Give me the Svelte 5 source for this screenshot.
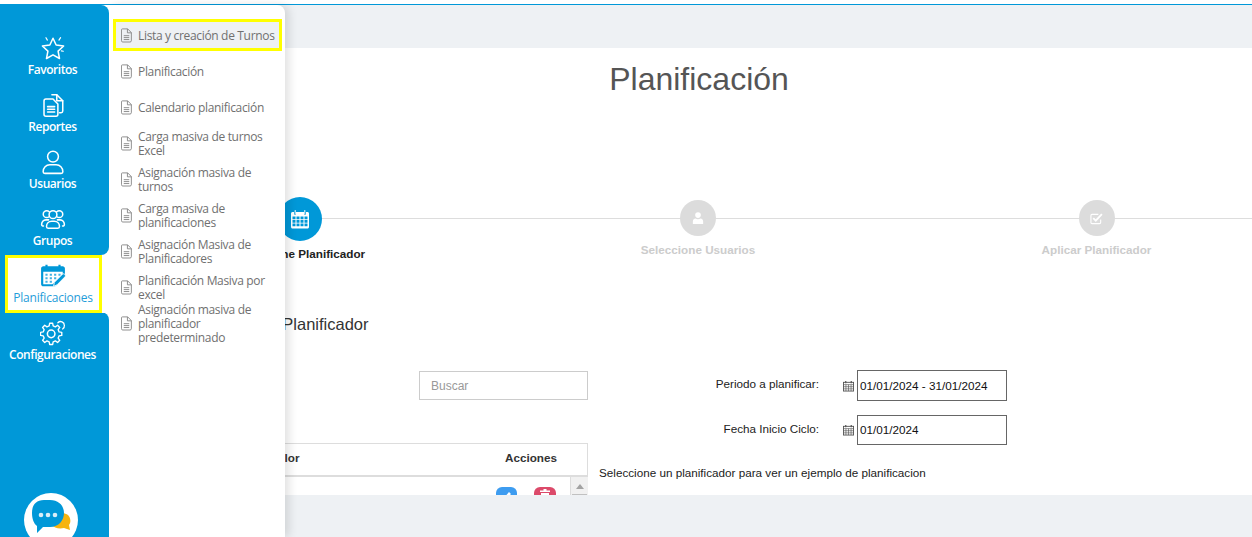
<script>
  const gearPath = (() => {
    const cx = 12, cy = 12, teeth = 8, ro = 11, ri = 8.4;
    let d = '';
    for (let i = 0; i < teeth; i++) {
      const a = (i / teeth) * Math.PI * 2;
      const w = Math.PI / teeth;
      const pts = [[ri, a - w * 0.62], [ro, a - w * 0.36], [ro, a + w * 0.36], [ri, a + w * 0.62]];
      pts.forEach(([r, t], j) => {
        const x = (cx + r * Math.cos(t)).toFixed(2);
        const y = (cy + r * Math.sin(t)).toFixed(2);
        d += (i === 0 && j === 0 ? 'M' : 'L') + x + ' ' + y + ' ';
      });
    }
    return d + 'Z';
  })();

  const railTop = [
    { label: 'Favoritos', icon: 'star' },
    { label: 'Reportes', icon: 'docs' },
    { label: 'Usuarios', icon: 'user' },
    { label: 'Grupos', icon: 'group' }
  ];

  const submenu = [
    'Lista y creación de Turnos',
    'Planificación',
    'Calendario planificación',
    'Carga masiva de turnos Excel',
    'Asignación masiva de turnos',
    'Carga masiva de planificaciones',
    'Asignación Masiva de Planificadores',
    'Planificación Masiva por excel',
    'Asignación masiva de planificador predeterminado'
  ];
</script>

{#snippet railIcon(name)}
  <svg class="rail-icon" viewBox="0 0 24 24" fill="none" stroke="currentColor" stroke-width="1.4" stroke-linecap="round" stroke-linejoin="round">
    {#if name === 'star'}
      <path d="M12 3l2.900 6.200 6.900.9-5.100 4.800 1.300 6.800-6-3.400-6 3.400 1.300-6.800-5.100-4.800 6.900-.9z" />
      <path d="M5.500 2.500l1.300 2.200M19 2.500l-1.500 2.200M21.500 15l-1.800-.4" stroke-width="1.100" />
    {:else if name === 'docs'}
      <path d="M11 2.500h4.500l5.500 5.500v9.500c0 1-.6 1.600-1.500 1.600H18" />
      <path d="M15.500 2.500V8H21" />
      <path d="M5.500 6.500H12l4.500 4.500v9.500c0 1-.7 1.800-1.700 1.800H5.500c-1 0-1.800-.8-1.800-1.800V8.300c0-1 .8-1.800 1.800-1.800z" />
      <path d="M7 13.500h6.500M7 16h6.500M7 18.500h6.500" />
    {:else if name === 'user'}
      <circle cx="12" cy="7" r="5" />
      <path d="M4.500 22.500c-1 0-1.600-.6-1.600-1.600 0-3.600 2.700-6.400 6.200-6.400h5.800c3.500 0 6.200 2.800 6.200 6.400 0 1-.6 1.600-1.600 1.600z" />
    {:else if name === 'group'}
      <circle cx="6.200" cy="7.500" r="3.200" />
      <circle cx="17.800" cy="7.500" r="3.200" />
      <circle cx="12" cy="8" r="3.600" fill="#0098d8" />
      <path d="M3.200 18.500c-1 0-1.700-.6-1.700-1.500 0-2.300 1.500-4.200 4-4.200h2.500M20.800 18.500c1 0 1.700-.6 1.700-1.500 0-2.300-1.500-4.200-4-4.200H16" />
      <path d="M7.500 20.500c-1 0-1.500-.7-1.500-1.500 0-2.800 2-5 4.800-5h2.400c2.800 0 4.800 2.200 4.800 5 0 .8-.5 1.500-1.500 1.500z" fill="#0098d8" />
    {:else if name === 'gear'}
      <path d={gearPath} transform="translate(-.5 2) scale(.9)" />
      <circle cx="10.300" cy="12.800" r="3.500" />
      <path d="M16.500 2.500a3.500 3.500 0 0 1 6 2.500c.2 1.500-.6 2.600-1.600 3.300" stroke-width="1.200" />
    {/if}
  </svg>
{/snippet}

{#snippet docIcon()}
  <svg class="doc" viewBox="0 0 12 16" fill="none" stroke="#858585" stroke-width="1">
    <path d="M1.500.8h5.800l4 4v8.900c0 .8-.6 1.400-1.400 1.400H1.900c-.8 0-1.400-.6-1.400-1.400V1.800c0-.6.400-1 1-1z" />
    <path d="M7 .8v4.300h4.300M3 8.200h6M3 10.300h6M3 12.400h6" />
  </svg>
{/snippet}

{#snippet calIcon()}
  <svg class="cal" viewBox="0 0 12 12" width="11" height="12" fill="none" stroke="#555" stroke-width="1">
    <rect x=".5" y="2" width="11" height="9.500" />
    <path d="M.5 4.500h11M.5 6.800h11M.5 9.100h11M3.200 4.500v7M6 4.500v7M8.800 4.500v7" stroke-width=".7" />
    <path d="M3 .5v2.500M9 .5v2.500" stroke-width="1.300" />
  </svg>
{/snippet}

<div class="page">
  <div class="shell">
    <main class="card">
      <h1>Planificación</h1>

      <ol class="stepper">
        <li class="step current">
          <span class="bubble">
            <svg viewBox="0 0 20 20" width="20" height="20">
              <path fill="#fff" d="M1 4.500c0-.8.700-1.500 1.500-1.500H4v2.500h2V3h8v2.500h2V3h1.500c.8 0 1.500.7 1.500 1.500V18c0 .8-.7 1.500-1.500 1.500h-15C1.700 19.500 1 18.800 1 18zM2.500 7.500v2.700h3V7.500zm4 0v2.700h3V7.500zm4 0v2.700h3V7.500zm4 0v2.700h3V7.500zm-12 3.500v2.700h3V11zm4 0v2.700h3V11zm4 0v2.700h3V11zm4 0v2.700h3V11zm-12 3.500v2.800h3v-2.800zm4 0v2.800h3v-2.800zm4 0v2.800h3v-2.800zm4 0v2.800h3v-2.800z" fill-rule="evenodd" />
              <rect x="4.700" y="1" width="1" height="4" rx=".5" fill="#fff" />
              <rect x="14.300" y="1" width="1" height="4" rx=".5" fill="#fff" />
            </svg>
          </span>
          <span class="step-label">Seleccione Planificador</span>
        </li>
        <li class="step">
          <span class="bubble">
            <svg viewBox="0 0 14 14" width="12" height="12">
              <circle cx="7" cy="3.600" r="3.300" fill="#fff" />
              <path fill="#fff" d="M1 14v-3.200C1 8.700 2.500 7.500 4 7.500c.8.600 1.900 1 3 1s2.200-.4 3-1c1.500 0 3 1.200 3 3.300V14z" />
            </svg>
          </span>
          <span class="step-label">Seleccione Usuarios</span>
        </li>
        <li class="step">
          <span class="bubble">
            <svg viewBox="0 0 14 14" width="13" height="13" fill="none" stroke="#fff">
              <path stroke-width="1.200" d="M11.500 8v3.300c0 .7-.5 1.200-1.200 1.200H2.200c-.7 0-1.200-.5-1.200-1.200V3.700c0-.7.500-1.200 1.200-1.200H9" />
              <path stroke-width="2" d="M3.500 6.500 6.200 9.200 12.800 2.200" />
            </svg>
          </span>
          <span class="step-label">Aplicar Planificador</span>
        </li>
      </ol>

      <h2>Seleccione Planificador</h2>

      <div class="columns">
        <section class="left">
          <input class="search" type="text" placeholder="Buscar" />
          <div class="table">
            <div class="thead">
              <span class="th-name">Color</span>
              <span class="th-actions">Acciones</span>
            </div>
            <div class="tbody">
              <div class="row">
                <span class="act edit">
                  <svg viewBox="0 0 12 12" width="12" height="12"><path d="M2 11 8 4l2 2-6 6z" fill="#fff" /></svg>
                </span>
                <span class="act del">
                  <svg viewBox="0 0 12 12" width="12" height="12"><path d="M4.500 1h3v1.500h3.500v1.500H1V2.500h3.500zM2 5h8v7H2z" fill="#fff" /></svg>
                </span>
              </div>
              <div class="scrollbar">
                <span class="arrow"></span>
                <span class="thumb"></span>
              </div>
            </div>
          </div>
        </section>

        <section class="right">
          <div class="field first">
            <span class="flabel">Periodo a planificar:</span>
            {@render calIcon()}
            <input class="date" type="text" value="01/01/2024 - 31/01/2024" />
          </div>
          <div class="field second">
            <span class="flabel">Fecha Inicio Ciclo:</span>
            {@render calIcon()}
            <input class="date" type="text" value="01/01/2024" />
          </div>
          <p class="hint">Seleccione un planificador para ver un ejemplo de planificacion</p>
        </section>
      </div>
    </main>
  </div>

  <nav class="nav">
    <div class="rail">
      <div class="rail-part top">
        {#each railTop as item}
          <a class="rail-item" href="#top">
            {@render railIcon(item.icon)}
            <span>{item.label}</span>
          </a>
        {/each}
      </div>
      <div class="active-wrap">
        <a class="rail-item active" href="#top">
          <svg class="rail-icon cal-big" viewBox="0 0 24 24">
            <path fill="#0098d8" d="M3 3h2V1.500h2V3h10V1.500h2V3h2c1 0 2 1 2 2v7l-9 9.500H3c-1 0-2-1-2-2V5c0-1 1-2 2-2z" />
            <path fill="#fff" d="M3 8h18v3l-9.500 8.500H3z" />
            <path fill="#0098d8" opacity=".75" d="M5 10h2v1.800H5zM9 10h2v1.800H9zM13 10h2v1.800h-2zM17 10h2v1.800h-2zM5 13.200h2V15H5zM9 13.200h2V15H9zM13 13.200h2V15h-2zM5 16.400h2v1.800H5zM9 16.400h2v1.800H9z" />
            <path fill="#0098d8" stroke="#fff" stroke-width=".8" d="M12.500 21.500l.8-3.700 7.200-7.300c.7-.7 1.700-.7 2.400 0s.7 1.700 0 2.400l-7.200 7.300z" />
          </svg>
          <span>Planificaciones</span>
        </a>
      </div>
      <div class="rail-part bottom">
        <a class="rail-item" href="#top">
          {@render railIcon('gear')}
          <span>Configuraciones</span>
        </a>
        <svg class="chat" viewBox="0 0 54 44" width="54" height="44">
          <circle cx="27" cy="27" r="27" fill="#fff" />
          <path fill="#f6b40e" d="M30 24c4-4 10-5 14-2 3 3 3 8 1 10l1 5-6-2c-5 1-10 0-12-3z" />
          <path fill="#0098d8" d="M20 7h6c9 0 14 6 14 13s-5 14-14 14H19l-6 6v-7c-3-2-5-7-5-13C8 12 12 7 20 7z" />
          <circle cx="17" cy="22" r="2.300" fill="#d9eef8" />
          <circle cx="24" cy="22" r="2.300" fill="#d9eef8" />
          <circle cx="31" cy="22" r="2.300" fill="#d9eef8" />
        </svg>
      </div>
    </div>

    <ul class="flyout">
      {#each submenu as label, i}
        <li class="fly-item" class:selected={i === 0}>
          <a class="fly-link" href="#top">
            {@render docIcon()}
            <span>{label}</span>
          </a>
        </li>
      {/each}
    </ul>
  </nav>
</div>

<style>
  :global(body) {
    margin: 0;
    font-family: "Liberation Sans", Arial, sans-serif;
  }
  .page {
    position: relative;
    width: 1252px;
    height: 537px;
    overflow: hidden;
    background: #fff;
    padding-top: 4px;
    box-sizing: border-box;
  }
  .shell {
    height: 533px;
    box-sizing: border-box;
    border-top: 1px solid #0098d8;
    background: #eef1f4;
    padding-top: 43px;
  }
  .card {
    height: 447px;
    background: #fff;
    overflow: hidden;
    padding-left: 146px;
    box-sizing: border-box;
  }
  h1 {
    margin: 0;
    padding-top: 13px;
    height: 37px;
    font-size: 32px;
    line-height: 37px;
    font-weight: 400;
    color: #555;
    text-align: center;
    box-sizing: content-box;
  }
  .stepper {
    position: relative;
    list-style: none;
    display: grid;
    grid-template-columns: 399px 398px 399px;
    width: 1196px;
    margin: 99px 0 0 -46px;
    padding: 0;
    height: 71px;
  }
  .stepper::before {
    content: "";
    position: absolute;
    left: 222px;
    right: 0;
    top: 21px;
    height: 1px;
    background: #ddd;
  }
  .step {
    position: relative;
    display: flex;
    flex-direction: column;
    align-items: center;
    padding-top: 3px;
    box-sizing: border-box;
  }
  .bubble {
    width: 36px;
    height: 36px;
    border-radius: 50%;
    background: #dcdcdc;
    display: flex;
    align-items: center;
    justify-content: center;
  }
  .step-label {
    margin-top: 7px;
    font-size: 11.7px;
    line-height: 14px;
    font-weight: 700;
    color: #ccc;
    white-space: nowrap;
  }
  .step.current { padding-top: 0; }
  .step.current .bubble {
    width: 44px;
    height: 44px;
    background: #0098d8;
  }
  .step.current .step-label { color: #222; margin-top: 6px; }
  h2 {
    margin: 0;
    padding-left: 51px;
    margin-top: 46px;
    font-size: 16.5px;
    line-height: 20px;
    font-weight: 400;
    color: #333;
  }
  .columns {
    display: grid;
    grid-template-columns: 442px 500px;
    column-gap: 11px;
    margin-top: 36px;
  }
  .left {
    display: flex;
    flex-direction: column;
    align-items: flex-end;
  }
  .search {
    width: 169px;
    height: 29px;
    margin-top: 1px;
    box-sizing: border-box;
    border: 1px solid #ccc;
    padding: 0 11px;
    font: 12px "Liberation Sans", Arial, sans-serif;
    outline: none;
  }
  .search::placeholder { color: #999; opacity: 1; }
  .table {
    width: 442px;
    margin-top: 43px;
  }
  .thead {
    display: flex;
    justify-content: space-between;
    align-items: center;
    height: 34px;
    padding-bottom: 4px;
    box-sizing: border-box;
    border: 1px solid #ddd;
    border-bottom-width: 2px;
    border-left: 0;
    font-size: 11.7px;
    font-weight: 700;
    color: #333;
  }
  .th-name { padding-left: 123px; }
  .th-actions { padding-right: 30px; }
  .tbody {
    display: flex;
    height: 60px;
  }
  .row {
    flex: 1;
    display: flex;
    justify-content: flex-end;
    gap: 17px;
    padding: 10px 14px 0 0;
    border-right: 1px solid #ddd;
  }
  .act {
    width: 21px;
    height: 22px;
    border-radius: 6px;
    display: flex;
    align-items: flex-start;
    justify-content: center;
    padding-top: 1px;
    box-sizing: border-box;
  }
  .act.edit { background: #3d9cf0; }
  .act.del { background: #dc4a6a; width: 22px; }
  .scrollbar {
    width: 17px;
    background: #f1f1f1;
    display: flex;
    flex-direction: column;
    align-items: center;
    padding-top: 7px;
    box-sizing: border-box;
  }
  .arrow {
    width: 0;
    height: 0;
    border-left: 4px solid transparent;
    border-right: 4px solid transparent;
    border-bottom: 5px solid #a3a3a3;
  }
  .thumb {
    width: 15px;
    height: 40px;
    margin-top: 5px;
    background: #c1c1c1;
  }
  .right { font-size: 11.7px; color: #222; }
  .field {
    display: flex;
    align-items: center;
  }
  .field.second { margin-top: 14px; height: 30px; }
  .field.first { height: 31px; }
  .flabel {
    width: 220px;
    text-align: right;
    white-space: nowrap;
    position: relative;
    top: -2px;
  }
  .cal { margin-left: 24px; margin-right: 3px; }
  .date {
    width: 150px;
    height: 100%;
    box-sizing: border-box;
    border: 1px solid #666;
    padding: 0 2px;
    font: 11.7px "Liberation Sans", Arial, sans-serif;
    color: #111;
    outline: none;
  }
  .field.second .date { padding-bottom: 2px; }
  .hint {
    margin: 21px 0 0;
    line-height: 14px;
    white-space: nowrap;
  }
  .nav {
    position: absolute;
    top: 5px;
    left: 0;
    bottom: 0;
    display: flex;
  }
  .rail {
    width: 109px;
    display: flex;
    flex-direction: column;
    background: #fff;
    position: relative;
    z-index: 2;
  }
  .rail-part {
    background: #0098d8;
    color: #fff;
  }
  .rail-part.top {
    height: 250px;
    padding-top: 22px;
    box-sizing: border-box;
    border-radius: 0 8px 8px 0;
  }
  .rail-part.bottom {
    flex: 1;
    display: flex;
    flex-direction: column;
    align-items: center;
    border-radius: 0 8px 0 0;
    overflow: hidden;
    justify-content: space-between;
  }
  .rail-item {
    display: flex;
    flex-direction: column;
    align-items: center;
    width: 100%;
    height: 57px;
    padding: 8px 4px 0 0;
    box-sizing: border-box;
    color: inherit;
    text-decoration: none;
    font-family: "Open Sans", sans-serif;
    font-size: 12px;
    font-weight: 600;
    letter-spacing: -.45px;
    line-height: 16px;
    white-space: nowrap;
  }
  .rail-item span { margin-top: 1px; }
  .rail-icon {
    width: 26px;
    height: 26px;
    flex: none;
  }
  .active-wrap {
    height: 58px;
    margin-bottom: -1px;
    padding-left: 5px;
    background: linear-gradient(to right, #0098d8 8px, #fff 8px);
    width: 109px;
    box-sizing: border-box;
    position: relative;
    z-index: 1;
  }
  .rail-item.active {
    width: 97px;
    height: 58px;
    border: 3px solid #ff0;
    background: #fff;
    color: #1f9dd9;
    padding: 5px 1px 0 0;
    font-weight: 400;
    letter-spacing: -.2px;
  }
  .chat {
    flex: none;
    margin-right: 7px;
  }
  .flyout {
    width: 176px;
    margin: 0;
    padding: 12px 3px 0 4px;
    box-sizing: border-box;
    list-style: none;
    background: #fff;
    border-radius: 0 8px 0 0;
    box-shadow: 4px 0 10px rgba(0, 0, 0, .12);
    font-family: "Open Sans", sans-serif;
    font-size: 12px;
    line-height: 14px;
    letter-spacing: -.33px;
    color: #707070;
  }
  .fly-item {
    height: 36px;
    display: flex;
    align-items: center;
  }
  .fly-link {
    display: flex;
    align-items: center;
    width: 100%;
    height: 32px;
    box-sizing: border-box;
    border: 3px solid transparent;
    padding: 2px 0 0 5px;
    color: inherit;
    text-decoration: none;
  }
  .selected .fly-link {
    border-color: #ff0;
    background: #eef1f4;
  }
  .doc {
    width: 11px;
    height: 15px;
    flex: none;
    margin-right: 6px;
    position: relative;
    top: -1px;
  }
</style>
